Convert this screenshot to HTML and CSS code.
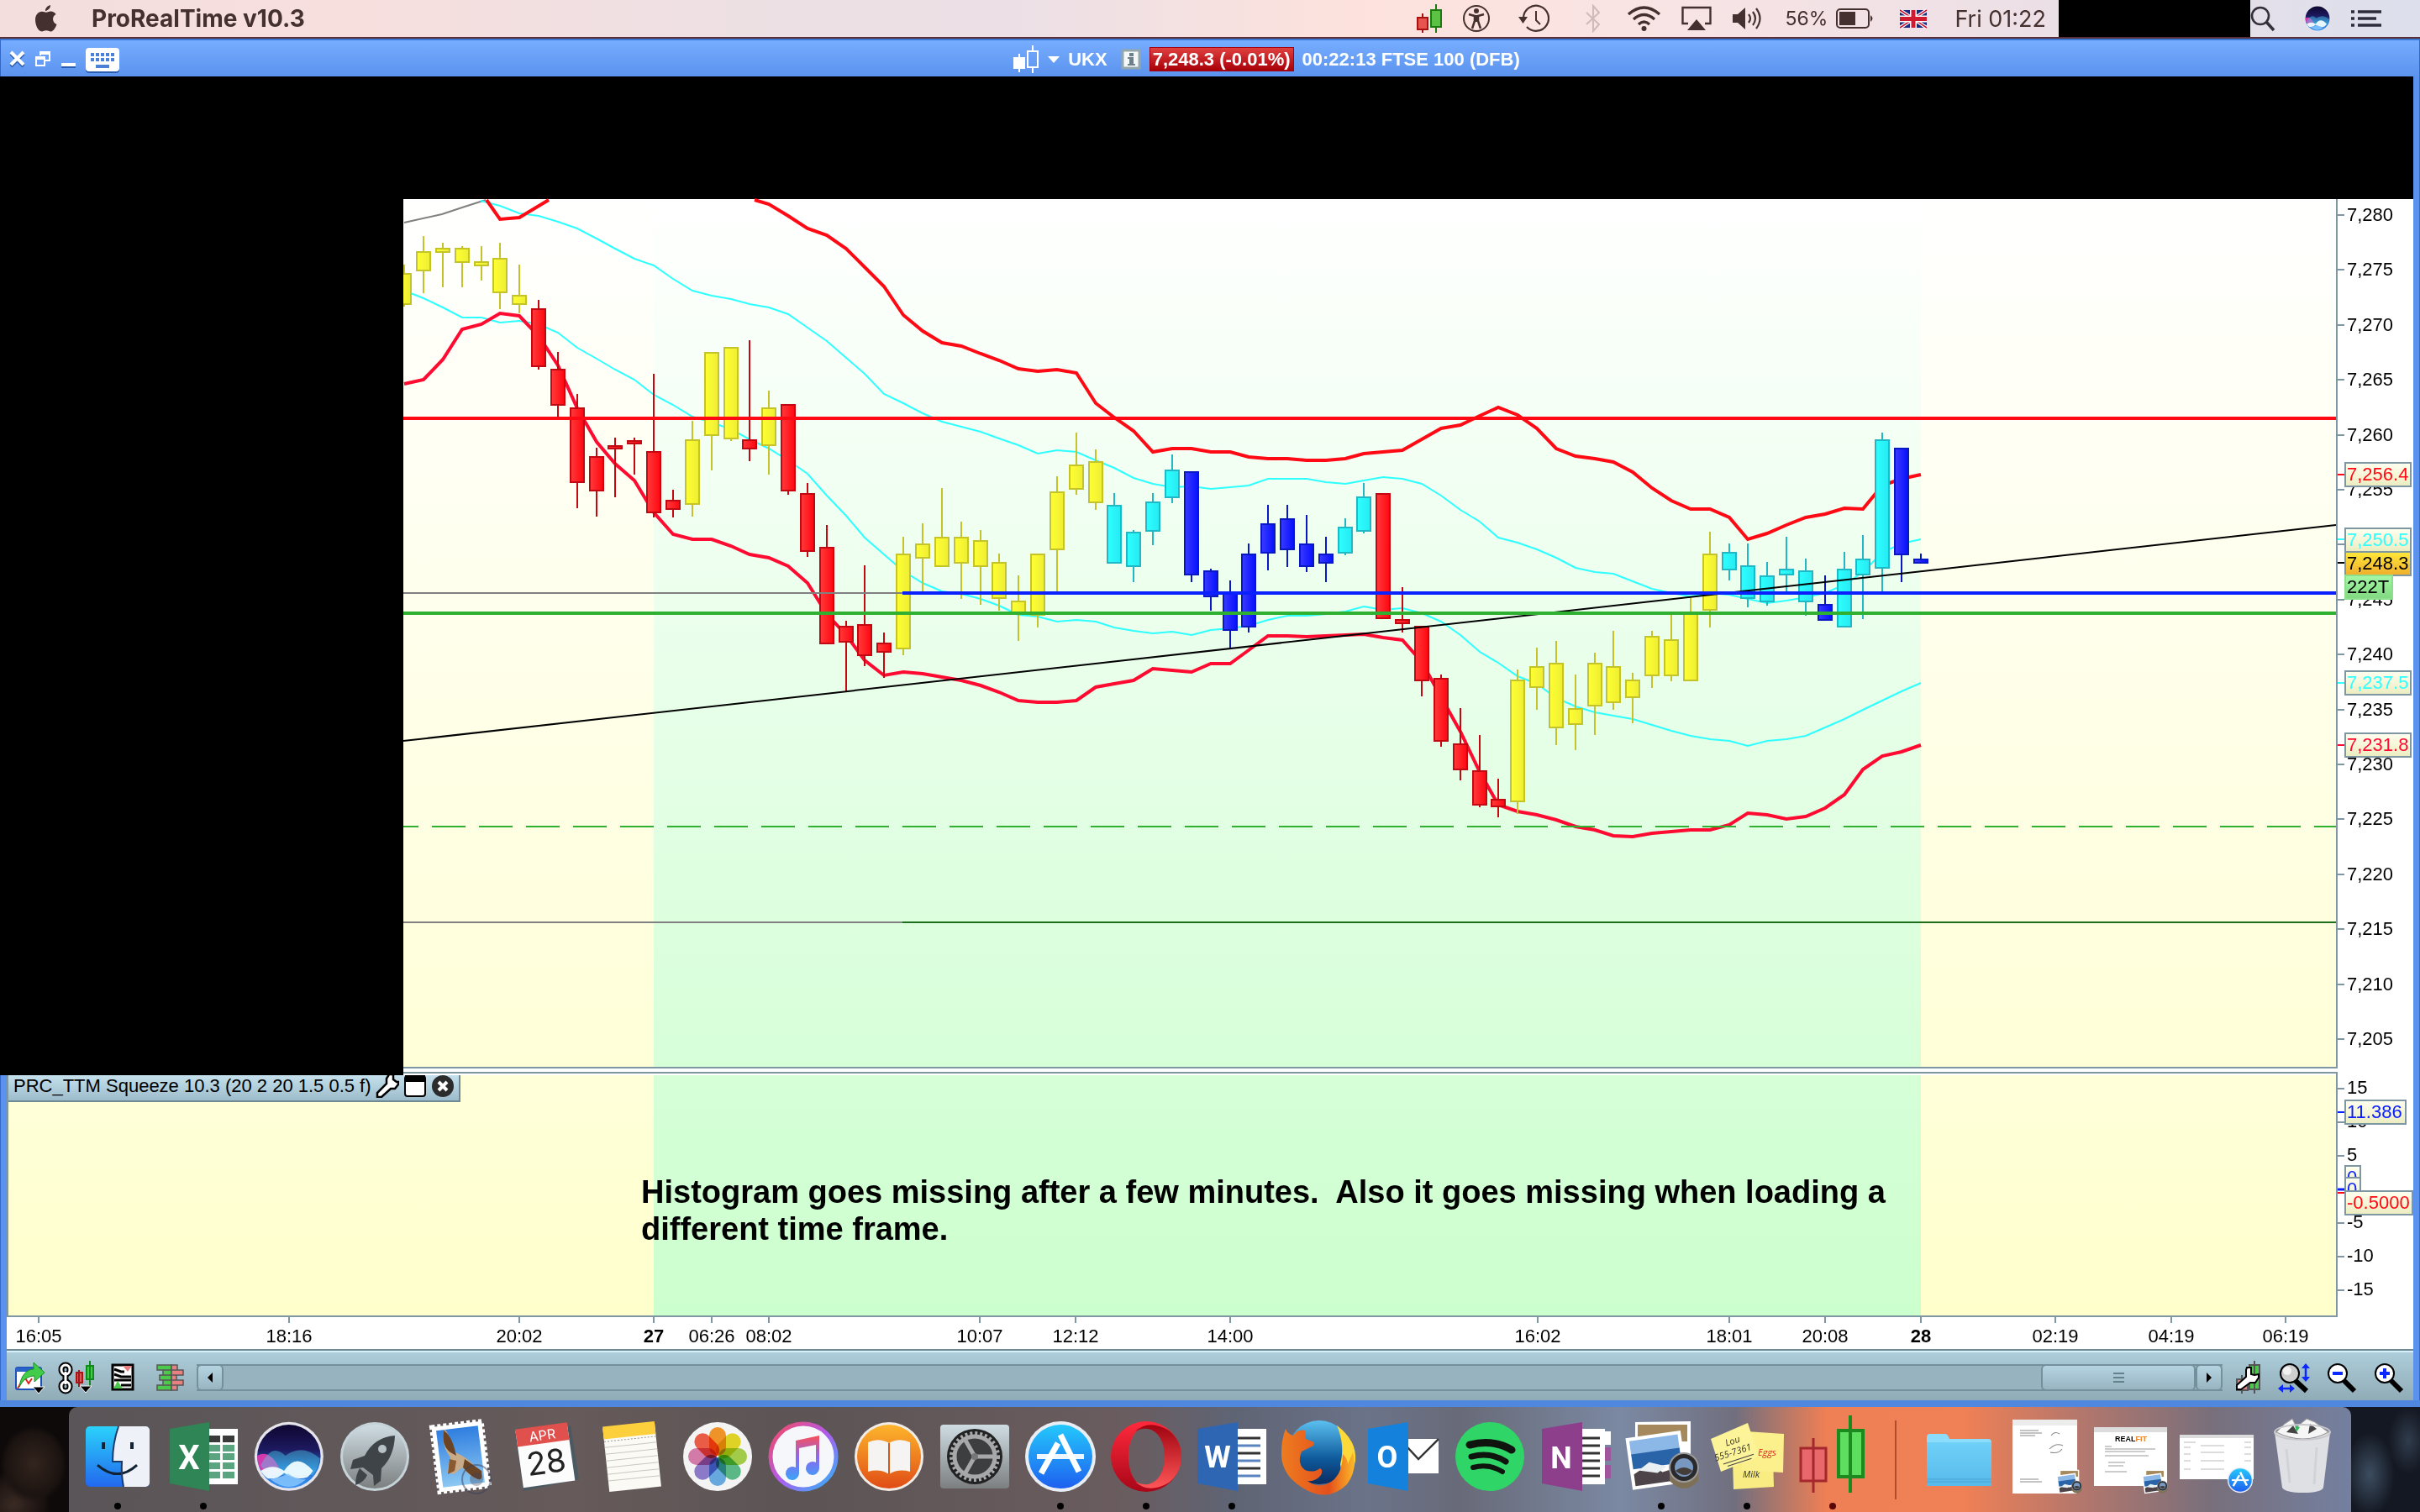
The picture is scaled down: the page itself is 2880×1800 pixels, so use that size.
FILE: index.html
```html
<!DOCTYPE html>
<html lang="en">
<head>
<meta charset="utf-8">
<title>ProRealTime v10.3 – UKX</title>
<link rel="stylesheet" href="styles.css">
</head>
<body>
<header class="menubar">
  <button class="plain" aria-label="Apple menu"><svg width="28" height="34" viewBox="0 0 28 34"><path fill="#44302f" d="M19 1c.3 3-2.500 6.500-6 7C12.600 5 15.500 1.700 19 1zM13.800 9.800c1.500 0 3-1.300 5.500-1.300 2.700 0 5 1.500 6.200 3.400-5.200 3-4.200 10 1 12-1.500 4.300-4.300 8.600-7.200 8.600-2 0-2.700-1.200-5.300-1.200s-3.400 1.200-5.300 1.200C4.500 32.500 1 25 1 18.800c0-6.200 3.800-10 7.800-10 2.400 0 3.800 1 5 1z"/></svg></button>
  <strong class="appname">ProRealTime v10.3</strong>
  <div class="status">
    <svg width="30" height="34" viewBox="0 0 30 34"><g stroke-width="2"><path stroke="#a11" fill="#e8554f" d="M7 11v5M7 31v3M1 16h12v14H1z"/><path stroke="#1c7a10" fill="#5cc244" d="M23 0v7M23 28v6M17 7h12v20H17z"/></g></svg>
    <svg width="34" height="34" viewBox="0 0 34 34"><circle cx="17" cy="17" r="15" fill="none" stroke="#44302f" stroke-width="2"/><circle cx="17" cy="8" r="3" fill="#44302f"/><path d="M8 12l7 2v6l-3 9M26 12l-7 2v6l3 9" fill="none" stroke="#44302f" stroke-width="2.500"/><path d="M14 13h6v8h-6z" fill="#44302f"/></svg>
    <svg width="46" height="34" viewBox="0 0 46 34"><path d="M15 16a15 15 0 1 1 4 11" fill="none" stroke="#44302f" stroke-width="2.200"/><path d="M9 15h11l-5.500 8z" fill="#44302f"/><path d="M30 8v11l5 5" fill="none" stroke="#44302f" stroke-width="2"/></svg>
    <svg width="44" height="34" viewBox="0 0 44 34"><path d="M20 10l15 14-7 8V2l7 8-15 14" fill="none" stroke="#cfb9bb" stroke-width="2"/></svg>
    <svg width="41" height="34" viewBox="0 0 41 34"><g fill="none" stroke="#44302f" stroke-width="3.400"><path d="M2 12q18.500-16 37 0M8 18q12.500-11 25 0M14 24q6.500-6 13 0"/></g><circle cx="20.500" cy="29" r="3" fill="#44302f"/></svg>
    <svg width="36" height="34" viewBox="0 0 36 34"><path d="M8 23H1.500V4h33v19H28" fill="none" stroke="#44302f" stroke-width="2.400"/><path d="M7 31l11-13 11 13z" fill="#44302f"/></svg>
    <svg width="40" height="34" viewBox="0 0 40 34"><path d="M1 12h6l9-8v26l-9-8H1z" fill="#44302f"/><path d="M20 12q4 5 0 10M25 9q6 8 0 16M29 5q9 12 0 24" fill="none" stroke="#44302f" stroke-width="2.200"/></svg>
    <span class="power"><span class="percent">56%</span><svg width="52" height="30" viewBox="0 0 52 30"><rect x="1" y="4" width="38" height="22" rx="4" fill="none" stroke="#44302f" stroke-width="2"/><path d="M4 7h19v16H4z M41 11q5 4 0 8z" fill="#44302f"/></svg></span>
    <svg width="41" height="34" viewBox="0 0 41 34"><path fill="#1a2a80" d="M0 7h32v21H0z"/><path d="M0 7l32 21M32 7L0 28" stroke="#fff" stroke-width="4"/><path d="M0 7l32 21M32 7L0 28" stroke="#c8102e" stroke-width="1.500"/><path d="M16 7v21M0 17.500h32" stroke="#fff" stroke-width="8"/><path d="M16 7v21M0 17.500h32" stroke="#d01a30" stroke-width="5"/></svg>
    <time class="clock">Fri 01:22</time>
  </div>
  <div class="masked-name"></div>
  <div class="menu-end">
    <button class="plain" aria-label="Spotlight"><svg width="32" height="34" viewBox="0 0 32 34"><circle cx="12" cy="14" r="10" fill="none" stroke="#33303c" stroke-width="2.600"/><path d="M19 21l9 10" stroke="#33303c" stroke-width="3.500"/></svg></button>
    <button class="plain siri" aria-label="Siri"><svg width="32" height="34" viewBox="0 0 102 102"><use href="#siri-face"/></svg></button>
    <button class="plain" aria-label="Notification Center"><svg width="36" height="34" viewBox="0 0 36 34"><path d="M0 9h4M8 9h28M0 17h4M8 17h22M0 25h4M8 25h28" stroke="#2c2c3c" stroke-width="3.500"/></svg></button>
  </div>
</header>

<main class="window">
  <div class="titlebar">
    <div class="window-buttons">
      <button class="plain" aria-label="Close"><svg width="20" height="24" viewBox="0 0 20 24"><path d="M2 5l15 15M17 5L2 20" stroke="#2a5cb0" stroke-width="4"/><path d="M2 3l15 15M17 3L2 18" stroke="#fff" stroke-width="4"/></svg></button>
      <button class="plain" aria-label="Restore"><svg width="20" height="24" viewBox="0 0 20 24"><g fill="none" stroke="#fff" stroke-width="2"><path d="M7 7V3h11v10h-5"/><path d="M2 9h10v10H2z"/></g><path d="M7 4h11M2 10h10" stroke="#fff" stroke-width="4"/></svg></button>
      <button class="plain" aria-label="Minimise"><svg width="20" height="24" viewBox="0 0 20 24"><path d="M2 20h17" stroke="#2a5cb0" stroke-width="4"/><path d="M2 18h17" stroke="#fff" stroke-width="4"/></svg></button>
      <button class="plain" aria-label="Keyboard"><svg width="42" height="32" viewBox="0 0 42 32"><rect x="1" y="4" width="40" height="28" rx="4" fill="#2a5cb0"/><rect x="1" y="2" width="40" height="28" rx="4" fill="#fff"/><path d="M7 10h29M7 16h29" stroke="#4a80d8" stroke-width="4" stroke-dasharray="4 2"/><path d="M13 24h16" stroke="#4a80d8" stroke-width="4"/></svg></button>
    </div>
    <div class="instrument">
      <svg width="32" height="34" viewBox="0 0 32 34"><path d="M1 14h14v14H1zM7 10h2v22H7z" fill="#fff"/><path d="M18 7h12v19H18zM24 0v7M24 26v7" fill="none" stroke="#fff" stroke-width="2"/></svg>
      <svg width="14" height="8" viewBox="0 0 14 8"><path d="M0 0h14L7 8z" fill="#fff"/></svg>
      <span class="symbol">UKX</span>
      <svg width="24" height="26" viewBox="0 0 24 26"><path fill="#f4f8f8" stroke="#93a7ad" stroke-width="3" d="M2 2h20v21H2z"/><path fill="#6d7f88" d="M10 5h5v4h-5zM8 10h7v8h2v2H8v-2h2v-6H8z"/></svg>
      <span class="quote">7,248.3 (-0.01%)</span>
      <span>00:22:13 FTSE 100 (DFB)</span>
    </div>
  </div>
  <div class="masked-band"></div>

  <svg class="panel" id="price" viewBox="8 237 2864 1043" role="img" aria-label="FTSE 100 price chart">
    <defs>
      <linearGradient id="off" x1="0" y1="0" x2="0" y2="1"><stop offset="0" stop-color="#fff"/><stop offset="1" stop-color="#ffffd8"/></linearGradient>
      <linearGradient id="day" x1="0" y1="0" x2="0" y2="1"><stop offset="0" stop-color="#fff"/><stop offset="1" stop-color="#d6ffd8"/></linearGradient>
      <linearGradient id="off2" x1="0" y1="0" x2="0" y2="1"><stop offset="0" stop-color="#ffffda"/><stop offset="1" stop-color="#ffffcc"/></linearGradient>
      <linearGradient id="day2" x1="0" y1="0" x2="0" y2="1"><stop offset="0" stop-color="#d6ffd8"/><stop offset="1" stop-color="#ccffce"/></linearGradient>
      <linearGradient id="y"><stop offset="0" stop-color="#ffff33"/><stop offset="1" stop-color="#eeee33"/></linearGradient>
      <linearGradient id="r"><stop offset="0" stop-color="#ff3b3b"/><stop offset="1" stop-color="#ff0610"/></linearGradient>
      <linearGradient id="c"><stop offset="0" stop-color="#2effff"/><stop offset="1" stop-color="#26eaf2"/></linearGradient>
      <linearGradient id="b"><stop offset="0" stop-color="#3b3bff"/><stop offset="1" stop-color="#0610ff"/></linearGradient>
      <linearGradient id="tag" x1="0" y1="0" x2="0" y2="1"><stop offset="0" stop-color="#fffff0"/><stop offset="1" stop-color="#ececc0"/></linearGradient>
      <linearGradient id="gold" x1="0" y1="0" x2="0" y2="1"><stop offset="0" stop-color="#ffe93a"/><stop offset="1" stop-color="#f0ad2c"/></linearGradient>
      <linearGradient id="mint" x1="0" y1="0" x2="0" y2="1"><stop offset="0" stop-color="#a6f8a6"/><stop offset="1" stop-color="#80d880"/></linearGradient>
    </defs>
    <path fill="#fff" d="M8 237h2864v1043H8z"/>
    <path fill="url(#off)" d="M480 237h2301v1033H480z"/>
    <path fill="url(#day)" d="M778 237h1508v1033H778z"/>
    <g id="bands"></g>
    <g id="candles"></g>
    <path class="trend" d="M480 882L2780 625"/>
    <path class="level grey" d="M480 706H1074"/>
    <path class="level red" d="M480 498H2780"/>
    <path class="level blue" d="M1074 706H2780"/>
    <path class="level green" d="M480 730H2780"/>
    <path class="level dashed" d="M480 984H2780"/>
    <path class="thin grey" d="M480 1098H1074"/>
    <path class="thin dark" d="M1074 1098H2780"/>
    <path class="frame" d="M480 1271H2781V237M480 1277H2781V1280"/>
    <g id="price-axis"></g>
    <path d="M0 237h480v1043H0z"/>
  </svg>

  <section class="indicator">
    <svg class="panel" id="squeeze" viewBox="8 1280 2864 326" role="img" aria-label="TTM Squeeze indicator">
      <path fill="#fff" d="M8 1280h2864v326H8z"/>
      <path fill="url(#off2)" d="M10 1280h2771v286H10z"/>
      <path fill="url(#day2)" d="M778 1280h1508v286H778z"/>
      <path class="frame" d="M9 1280V1567H2781V1280"/>
      <g id="squeeze-axis"></g>
      <g id="time-axis"></g>
      <g class="note"><text x="763" y="1432">Histogram goes missing after a few minutes.  Also it goes missing when loading a</text><text x="763" y="1476">different time frame.</text></g>
    </svg>
    <div class="indicator-head">
      <span>PRC_TTM Squeeze 10.3 (20 2 20 1.5 0.5 f)</span>
      <button class="plain" aria-label="Settings"><svg width="28" height="28" viewBox="0 0 28 28"><path d="M16 0h5v6l4 3h2v3l-4 5h-5L7 27H2v-5l11-11V5z" fill="#fff" stroke="#000" stroke-width="2.500"/></svg></button>
      <button class="plain" aria-label="Maximise"><svg width="28" height="28" viewBox="0 0 28 28"><rect x="2" y="2" width="24" height="24" rx="3" fill="#fff" stroke="#000" stroke-width="2"/><path d="M2 1h24v8H2z"/></svg></button>
      <button class="plain" aria-label="Remove"><svg width="28" height="28" viewBox="0 0 28 28"><circle cx="14" cy="14" r="13" fill="#2c2c2c"/><path d="M9 9l10 10M19 9L9 19" stroke="#fff" stroke-width="4"/></svg></button>
    </div>
  </section>

  <div class="toolbar">
    <button class="plain" aria-label="Share chart"><svg width="38" height="42" viewBox="0 0 38 42"><rect x="1" y="9" width="30" height="26" rx="2" fill="#fff" stroke="#1b50b8" stroke-width="2"/><path d="M1 9h30v5H1z" fill="#2a62c8"/><path d="M3 34l8-14 5 8 4-6" fill="none" stroke="#e02020" stroke-width="2"/><path d="M5 32C7 18 14 11 22 11V3l13 12-12 11v-7C15 19 9 24 5 32z" fill="#42cc4a" stroke="#159022"/><path d="M21 32h14l-7 8z" stroke="#fff"/></svg></button>
    <button class="plain" aria-label="Link chart"><svg width="46" height="42" viewBox="0 0 46 42"><g fill="none" stroke="#000" stroke-width="7"><rect x="5" y="6" width="10" height="11" rx="5"/><rect x="5" y="26" width="10" height="11" rx="5"/><path d="M10 14v15"/></g><g fill="none" stroke="#fff" stroke-width="3"><rect x="5" y="6" width="10" height="11" rx="5"/><rect x="5" y="26" width="10" height="11" rx="5"/><path d="M10 14v15"/></g><path d="M26 12v20M23 15h7v12h-7z" fill="#e25858" stroke="#a01818" stroke-width="2"/><path d="M39 1v32M35 7h8v16h-8z" fill="#42cc4a" stroke="#108a18" stroke-width="2"/><path d="M27 31h14l-7 8z" stroke="#fff"/></svg></button>
    <button class="plain list" aria-label="Indicators"><svg width="28" height="34" viewBox="0 0 28 34"><path fill="#fff" stroke="#000" stroke-width="3" d="M2 2h24v29H2z"/><path d="M4 7l8 3h4M4 13l8 3h12M4 20h20M12 26h12" fill="none" stroke="#000" stroke-width="3"/><path d="M14 3h11l-5 7z" fill="#e88080"/><path d="M3 30l5-9 6 9z" fill="#4cc84c"/></svg></button>
    <button class="plain book" aria-label="Order book"><svg width="34" height="34" viewBox="0 0 34 34"><g stroke="#555" stroke-width="1.500"><path fill="#4cc84c" d="M1 2h17v6H1zM8 8h10v6H8zM4 14h14v6H4zM8 20h10v6H8zM1 26h17v6H1z"/><path fill="#e88080" d="M18 2h7v6h-7zM18 8h14v6H18zM18 14h6v6h-6zM18 20h14v6H18zM18 26h7v6h-7z"/></g></svg></button>
    <div class="scroller">
      <button class="step" aria-label="Scroll left"><svg width="8" height="14" viewBox="0 0 8 14"><path d="M7 1v12L1 7z"/></svg></button>
      <div class="track"><div class="thumb"><i></i><i></i><i></i></div></div>
      <button class="step" aria-label="Scroll right"><svg width="8" height="14" viewBox="0 0 8 14"><path d="M1 1v12l6-6z"/></svg></button>
    </div>
    <div class="zooms">
      <button class="plain" aria-label="Chart settings"><svg width="38" height="42" viewBox="0 0 38 42"><path d="M11 18v22M5 23h13v13H5z" fill="#e88080" stroke="#555" stroke-width="2"/><path d="M26 1v39M20 6h12v29H20z" fill="#4cc84c" stroke="#555" stroke-width="2"/><path d="M17 9h5v8l4 1 5-1v4l-4 6h-6L10 35H5v-5l11-10v-8z" fill="#fff" stroke="#000" stroke-width="2"/></svg></button>
      <button class="plain" aria-label="Zoom fit"><svg width="42" height="42" viewBox="0 0 42 42"><path d="M22 24l14 13" stroke="#000" stroke-width="6"/><circle cx="16" cy="16" r="11" fill="#cfcfcf" stroke="#000" stroke-width="2"/><circle cx="13" cy="13" r="5" fill="#f2f2f2"/><path d="M35 8v14M6 34h12" stroke="#0a28ff" stroke-width="2.500"/><path d="M30 10l5-6 5 6zM30 20l5 6 5-6zM8 29v10l-6-5zM16 29v10l6-5z" fill="#0a28ff"/></svg></button>
      <button class="plain" aria-label="Zoom out"><svg width="42" height="42" viewBox="0 0 42 42"><path d="M24 24l13 13" stroke="#000" stroke-width="6"/><circle cx="17" cy="16" r="11" fill="#fff" stroke="#000" stroke-width="2"/><path d="M11 16h12" stroke="#0a28ff" stroke-width="4"/></svg></button>
      <button class="plain" aria-label="Zoom in"><svg width="42" height="42" viewBox="0 0 42 42"><path d="M24 24l13 13" stroke="#000" stroke-width="6"/><circle cx="17" cy="16" r="11" fill="#fff" stroke="#000" stroke-width="2"/><path d="M11 16h12M17 10v12" stroke="#0a28ff" stroke-width="4"/></svg></button>
    </div>
  </div>
</main>

<footer class="desktop">
  <svg class="defs" width="0" height="0" aria-hidden="true"><defs>
    <linearGradient id="siriBg" x1="0" y1="0" x2="0" y2="1"><stop offset="0" stop-color="#0e0630"/><stop offset=".4" stop-color="#1d1a60"/><stop offset=".7" stop-color="#2470d0"/><stop offset="1" stop-color="#3a90f0"/></linearGradient>
    <linearGradient id="finder" x1="0" y1="0" x2="0" y2="1"><stop offset="0" stop-color="#2bd2fb"/><stop offset="1" stop-color="#2268ee"/></linearGradient>
    <linearGradient id="silver" x1="0" y1="0" x2="0" y2="1"><stop offset="0" stop-color="#cfdde3"/><stop offset="1" stop-color="#7c7f80"/></linearGradient>
    <linearGradient id="books" x1="0" y1="0" x2="0" y2="1"><stop offset="0" stop-color="#fdb52c"/><stop offset="1" stop-color="#e04c16"/></linearGradient>
    <linearGradient id="store" x1="0" y1="0" x2="0" y2="1"><stop offset="0" stop-color="#24c8fc"/><stop offset="1" stop-color="#1e60f0"/></linearGradient>
    <linearGradient id="opera" x1="0" y1="0" x2="0" y2="1"><stop offset="0" stop-color="#ff2a3c"/><stop offset="1" stop-color="#a80618"/></linearGradient>
    <linearGradient id="operaRight" x1="0" y1="0" x2="0" y2="1"><stop offset="0" stop-color="#a00410"/><stop offset="1" stop-color="#ff5658"/></linearGradient>
    <linearGradient id="tune" x1="0" y1="0" x2="1" y2="1"><stop offset="0" stop-color="#f8485a"/><stop offset=".5" stop-color="#b05cf0"/><stop offset="1" stop-color="#28b8f8"/></linearGradient>
    <linearGradient id="note" x1="0" y1="0" x2="0" y2="1"><stop offset="0" stop-color="#fb4e58"/><stop offset=".5" stop-color="#8a68f0"/><stop offset="1" stop-color="#3aa4f8"/></linearGradient>
    <linearGradient id="sky" x1="0" y1="0" x2="0" y2="1"><stop offset="0" stop-color="#2f7ee0"/><stop offset="1" stop-color="#8cc8f2"/></linearGradient>
    <linearGradient id="folder" x1="0" y1="0" x2="0" y2="1"><stop offset="0" stop-color="#6fd0f8"/><stop offset="1" stop-color="#58baea"/></linearGradient>
    <linearGradient id="globe" x1="0" y1="0" x2="0" y2="1"><stop offset="0" stop-color="#5cc0f0"/><stop offset=".6" stop-color="#0e5a9c"/><stop offset="1" stop-color="#0c2c60"/></linearGradient>
    <linearGradient id="fox" x1="0" y1="0" x2="1" y2="0"><stop offset="0" stop-color="#ee7c20"/><stop offset=".65" stop-color="#e4501c"/><stop offset="1" stop-color="#fcb828"/></linearGradient>
    <g id="siri-face"><circle cx="51" cy="51" r="50" fill="#e4e4ea"/><circle cx="51" cy="51" r="46" fill="url(#siriBg)"/><path d="M5 50q14-8 26 8 6 8 8 16-20 8-28-2-6-10-6-22z" fill="#e838b0" opacity=".9"/><path d="M10 64Q26 30 46 50q24-18 50 4-2 14-10 24H20z" fill="#50d8f0" opacity=".4"/><path d="M10 72q18-12 34 0 18-28 42 0-4 6-8 9-16 6-34-6-10 10-24 8-6-4-10-11z" fill="#f0fcff" opacity=".95"/><path d="M24 84q14-2 26-8 14 10 26 8-24 22-52 0z" fill="#8ccaff" opacity=".8"/></g>
    <g id="store-face"><circle r="42" fill="#e8eef4"/><circle r="38" fill="url(#store)"/><path d="M-28 0h56" stroke="#eef6ff" stroke-width="6"/><path d="M-3-16L-23 20M0-26L22 18" stroke="#fff" stroke-width="7"/></g>
    <g id="preview-face"><path fill="#fff" d="M12 20l66-1v70H12z"/><path fill="#a5885c" d="M15 23h59v20H15z"/><g transform="rotate(-8 40 62)"><path fill="#fff" d="M4 34h66v62H4z"/><path fill="#8cb8e8" d="M8 38h58v18H8z"/><path fill="#2a64a8" d="M8 54h58v18H8z"/><path fill="#4c4448" d="M8 78l20-10 14 12 24-4v16H8z"/><path fill="#e8f0f4" d="M14 74l14-8 20 8-12 6z"/></g><path d="M53 74v16q17 18 34 0V74z" fill="#7d7056"/><circle cx="70" cy="74" r="17" fill="#2a2a2c" stroke="#9a9a9a" stroke-width="2"/><circle cx="70" cy="74" r="11" fill="#7898c0"/><path d="M60 78q10-8 20 0-8 10-20 0z" fill="#443c38"/></g>
  </defs></svg>
  <nav class="dock" aria-label="Dock">
    <button class="plain" aria-label="Finder"><svg viewBox="0 0 102 126"><rect x="13" y="23" width="76" height="72" rx="5" fill="url(#finder)"/><path d="M51 23h33a5 5 0 0 1 5 5v62a5 5 0 0 1-5 5H58q-3-13-2-30H45q0-24 6-42z" fill="#eef2f8"/><path d="M34 42v8M68 42v8" stroke="#123" stroke-width="4"/><path d="M27 69q24 21 47 0" fill="none" stroke="#123" stroke-width="3"/><path d="M52 23q-7 20-7 42h11q-1 15 2 30" fill="none" stroke="#1a3a6a" stroke-width="2"/><circle class="dot" cx="51" cy="118" r="4"/></svg></button>
    <button class="plain" aria-label="Excel"><svg viewBox="0 0 102 126"><path fill="#fff" d="M55 26h37v66H55z"/><path stroke="#5aa480" stroke-width="8" stroke-dasharray="14 3" d="M57 49h34M57 59h34M57 70h34M57 81h34"/><path stroke="#3a3a3a" stroke-width="8" stroke-dasharray="14 3" d="M57 38h34"/><path fill="#2f8556" d="M11 26l47-8v82l-47-9z"/><text class="letter" x="34" y="74">X</text><circle class="dot" cx="51" cy="118" r="4"/></svg></button>
    <button class="plain" aria-label="Siri"><svg viewBox="0 0 102 126"><use href="#siri-face" transform="translate(9 17) scale(.82)"/></svg></button>
    <button class="plain" aria-label="Launchpad"><svg viewBox="0 0 102 126"><circle cx="51" cy="59" r="41" fill="#c5d2d8"/><circle cx="51" cy="59" r="38" fill="url(#silver)"/><path d="M75 34q-25 2-36 24l-14 5-3 11 15-2 12 9 1 13 8-6 1-15q15-14 16-39zM33 73l9 8q-3 8-14 12 0-12 5-20z" fill="#3f4448"/><circle cx="60" cy="50" r="5" fill="#b8c2c6"/></svg></button>
    <button class="plain" aria-label="Mail"><svg viewBox="0 0 102 126"><g transform="rotate(-7 51 59)"><path d="M21 20h60v78H21z" fill="#fff" stroke="#fff" stroke-width="5" stroke-dasharray="4 3"/><path fill="url(#sky)" d="M26 25h50v68H26z"/></g><path d="M31 28q2-2 4 2l10 24 8 4 6 4 16 14q2 12-4 10-10-4-18-14l-10 8-8-2 4-18Q28 46 31 28z" fill="#c8ab88"/><path d="M31 28q10 6 15 30l-7-4Q28 46 31 28zM56 62l20 14q2 12-4 10-10-4-18-14z" fill="#6a4424"/><path d="M44 76l-8 4 2-18 8 2z" fill="#8a5a30"/><circle cx="70" cy="86" r="17" fill="none" stroke="#38405c" stroke-width="2" opacity=".5"/><circle cx="70" cy="86" r="8" fill="#38405c" opacity=".35"/></svg></button>
    <button class="plain" aria-label="Calendar"><svg viewBox="0 0 102 126"><path fill="#4b5a62" d="M14 32l66-10 10 64-66 14z"/><g transform="rotate(-8 51 59)"><path fill="#fcfcfc" d="M19 24h62v68H19z"/><path fill="#e0504c" d="M19 22h62v21H19z"/><text class="month" x="50" y="39">APR</text><text class="date" x="50" y="79">28</text></g></svg></button>
    <button class="plain" aria-label="Notes"><svg viewBox="0 0 102 126"><g transform="rotate(-6 51 59)"><path fill="#fbfaf4" d="M20 22h62v76H20z"/><path fill="#fcd03c" d="M20 20h62v15H20z"/><path stroke="#c8c8c0" d="M20 45h62M20 53h62M20 61h62M20 69h62M20 77h62M20 85h62"/><path d="M20 38h62" stroke="#999" stroke-dasharray="2 2"/></g></svg></button>
    <button class="plain" aria-label="Photos"><svg viewBox="0 0 102 126"><circle cx="51" cy="59" r="41" fill="#f4f4f4"/><g class="petals"><rect x="41" y="24" width="20" height="34" rx="10" fill="#f89a28"/><rect x="41" y="24" width="20" height="34" rx="10" fill="#e8dc28" transform="rotate(45 51 59)"/><rect x="41" y="24" width="20" height="34" rx="10" fill="#a8d44c" transform="rotate(90 51 59)"/><rect x="41" y="24" width="20" height="34" rx="10" fill="#60c08c" transform="rotate(135 51 59)"/><rect x="41" y="24" width="20" height="34" rx="10" fill="#6cb0e8" transform="rotate(180 51 59)"/><rect x="41" y="24" width="20" height="34" rx="10" fill="#9080d0" transform="rotate(225 51 59)"/><rect x="41" y="24" width="20" height="34" rx="10" fill="#dc80b0" transform="rotate(270 51 59)"/><rect x="41" y="24" width="20" height="34" rx="10" fill="#f46048" transform="rotate(315 51 59)"/></g></svg></button>
    <button class="plain" aria-label="iTunes"><svg viewBox="0 0 102 126"><circle cx="51" cy="59" r="39" fill="#f6f7fa" stroke="url(#tune)" stroke-width="5"/><path d="M42 40l28-6v39a8 8 0 1 1-4-7V45l-20 4v30a8 8 0 1 1-4-7z" fill="url(#note)"/></svg></button>
    <button class="plain" aria-label="iBooks"><svg viewBox="0 0 102 126"><circle cx="51" cy="59" r="41" fill="#f2ece6"/><circle cx="51" cy="59" r="38" fill="url(#books)"/><path d="M51 43q-12-7-25-1v35q14-4 25 3 11-7 25-3V42q-13-6-25 1z" fill="#f6f4f2"/><path d="M51 43v37" stroke="#d05a1c" stroke-width="2"/></svg></button>
    <button class="plain" aria-label="System Preferences"><svg viewBox="0 0 102 126"><rect x="10" y="21" width="82" height="76" rx="4" fill="url(#silver)"/><circle cx="51" cy="59" r="33" fill="#222"/><circle cx="51" cy="59" r="24" fill="#3c3e40" stroke="#a6a8aa" stroke-width="5"/><circle cx="51" cy="59" r="28" fill="none" stroke="#a6a8aa" stroke-width="4" stroke-dasharray="3 3"/><path d="M51 59h24M51 59L39 38M51 59L39 80" stroke="#a6a8aa" stroke-width="5"/><circle cx="51" cy="59" r="4" fill="#777"/></svg></button>
    <button class="plain" aria-label="App Store"><svg viewBox="0 0 102 126"><use href="#store-face" x="51" y="59"/><circle class="dot" cx="51" cy="118" r="4"/></svg></button>
    <button class="plain" aria-label="Opera"><svg viewBox="0 0 102 126"><path fill="url(#opera)" fill-rule="evenodd" d="M51 17a42 42 0 1 1 0 84a42 42 0 1 1 0-84zm0 7c-13 0-21 16-21 35s8 35 21 35 22-16 22-35-9-35-22-35z"/><path fill="url(#operaRight)" d="M38 29Q54 14 78 28q15 12 15 31T78 90Q54 104 38 89q16 8 27-4 8-10 8-26t-8-26Q54 21 38 29z"/><circle class="dot" cx="51" cy="118" r="4"/></svg></button>
    <button class="plain" aria-label="Word"><svg viewBox="0 0 102 126"><path fill="#fff" d="M55 26h37v66H55z"/><path stroke="#333" stroke-width="3" d="M58 37h27M58 55h27M58 73h27"/><path stroke="#5a84c0" stroke-width="3" d="M58 46h27M58 64h27M58 82h27"/><path fill="#2f66b4" d="M10 26l48-8v82l-48-9z"/><text class="letter small" x="34" y="72">W</text><circle class="dot" cx="51" cy="118" r="4"/></svg></button>
    <button class="plain" aria-label="Firefox"><svg viewBox="0 0 102 126"><circle cx="53" cy="54" r="38" fill="url(#globe)"/><path d="M74 22q24 18 22 42-4 22-20 28 4-16 2-24 6-22-4-46z" fill="#fcd838"/><path d="M13 26q2 6 9 8 6-8 14-6l1 10 10 4-1 4-14 7q-6 14 4 22 10 4 18-2 4 2 1 8-6 8-16 7 16 12 32-2 10-10 10-30 6 6 6 12l6-14q6 20-7 38-20 20-46 8Q8 84 8 56q0-18 5-30z" fill="url(#fox)"/></svg></button>
    <button class="plain" aria-label="Outlook"><svg viewBox="0 0 102 126"><path fill="#fff" d="M55 38h38v41H55z"/><path d="M56 48l13 14 24-24" fill="none" stroke="#333" stroke-width="2.500"/><path fill="#1482dc" d="M9 26l48-8v82L9 91z"/><text class="letter small" x="32" y="72">O</text></svg></button>
    <button class="plain" aria-label="Spotify"><svg viewBox="0 0 102 126"><circle cx="51" cy="59" r="41" fill="#2fd566"/><g fill="none" stroke="#10140f" stroke-linecap="round"><path stroke-width="9" d="M27 45q28-7 50 6"/><path stroke-width="7" d="M29 59q23-6 41 6"/><path stroke-width="6" d="M31 72q19-5 35 5"/></g></svg></button>
    <button class="plain" aria-label="OneNote"><svg viewBox="0 0 102 126"><path fill="#fff" d="M56 26h30v66H56z"/><path fill="#a0559c" d="M86 48h7v16h-7zM86 69h7v16h-7z"/><path fill="#fff" d="M86 29h7v16h-7z"/><path stroke="#333" stroke-width="3" d="M58 37h22M58 46h22M58 55h22M58 64h22M58 73h22M58 82h22"/><path fill="#8d3f8b" d="M11 26l48-8v82l-48-9z"/><text class="letter small" x="34" y="73">N</text></svg></button>
    <button class="plain" aria-label="Preview"><svg viewBox="0 0 102 126"><use href="#preview-face" x="8" y="-2"/><circle class="dot" cx="51" cy="118" r="4"/></svg></button>
    <button class="plain" aria-label="Stickies"><svg viewBox="0 0 102 126"><path fill="#f8ec82" d="M34 62h48l1 33-48 3z"/><text class="pen" x="46" y="84">Milk</text><path fill="#fcf08c" d="M50 29l45 3-1 46-50-3z"/><text class="pen redpen" x="64" y="58">Eggs</text><path fill="#fdf49a" d="M8 38l44-19 13 40-45 18z"/><g transform="rotate(-18 36 50)"><text class="pen" x="28" y="44">Lou</text><text class="pen" x="10" y="57">555-7361</text><path d="M18 63h38M22 67h30" stroke="#444"/></g><circle class="dot" cx="51" cy="118" r="4"/></svg></button>
    <button class="plain" aria-label="ProRealTime"><svg viewBox="0 0 102 126"><path d="M28 37v65M13 49h30v39H13z" stroke="#a4282c" stroke-width="3" fill="#e8686c"/><path d="M72 10v92M58 28h29v55H58z" stroke="#1d8a1f" stroke-width="4" fill="#5ede5e"/><circle cx="51" cy="118" r="4" fill="#5a0606"/></svg></button>
    <hr class="divider">
    <button class="plain" aria-label="Downloads"><svg viewBox="0 0 102 126"><path fill="#8cdcfc" d="M12 36q0-4 4-4h18q3 0 5 6h46q4 0 4 4v10H12z"/><path fill="url(#folder)" d="M12 42h77v52H12z"/><path stroke="#48a4d4" d="M12 86h77M12 89h77"/></svg></button>
    <button class="plain" aria-label="Document window"><svg viewBox="0 0 102 126"><path fill="#fff" d="M12 15h77v88H12z"/><path fill="#ececec" d="M12 15h77v7H12z"/><path stroke="#888" d="M21 28h22M21 31h26M21 34h18M21 86h22M21 89h26"/><path d="M58 34q4-6 10-2M56 50q8-8 16-4M57 54q10 2 14-4" fill="none" stroke="#888"/><use href="#preview-face" transform="translate(64 68) scale(.35)"/></svg></button>
    <button class="plain" aria-label="Letter window"><svg viewBox="0 0 102 126"><path fill="#fff" d="M7 24h87v70H7z"/><path fill="#dcdcdc" d="M7 24h87v6H7z"/><text class="brand" x="32" y="41">REAL<tspan fill="#f08020">FIT</tspan></text><path stroke="#999" d="M20 47h8M20 50h60M20 53h48M20 58h52M24 66h20M24 70h18M20 77h26"/><use href="#preview-face" transform="translate(64 68) scale(.35)"/></svg></button>
    <button class="plain" aria-label="Updates window"><svg viewBox="0 0 102 126"><path fill="#fff" d="M7 33h88v53H7z"/><path fill="#dcdcdc" d="M7 33h88v4H7z"/><path stroke="#bbb" d="M12 42h14M84 42h8M12 48h8M32 46h28M84 48h8M12 56h8M32 54h28M84 56h8M12 64h8M32 64h28M84 64h8M12 74h8M32 74h28"/><use href="#store-face" transform="translate(79 87) scale(.36)"/></svg></button>
    <button class="plain" aria-label="Trash"><svg viewBox="0 0 102 126"><path fill="#dfe0e4" d="M18 30q33-12 66 0l-8 66q-3 6-24 6t-25-6z"/><path d="M20 30l10-10 9-6 5 10 12-10 10 4 8 6 8 6q-30 16-62 0z" fill="#f6f6f6" stroke="#999"/><path d="M32 30l8-8 6 10zM60 20l8 6-10 6z" fill="#444"/><path d="M42 22l6 2-4 6z" fill="#38b860"/><ellipse cx="51" cy="30" rx="33" ry="9" fill="none" stroke="#c8c8cc" stroke-width="2"/><path d="M32 50l4 40M68 48l-3 44" stroke="#d2d3d7" stroke-width="3"/></svg></button>
  </nav>
</footer>
<script src="chart.js"></script>
</body>
</html>
```
FILE: styles.css
```css
* { box-sizing: border-box; }

body {
  margin: 0;
  min-height: 100vh;
  display: flex;
  flex-direction: column;
  font-family: "Liberation Sans", Arial, sans-serif;
  font-size: 22px;
  color: #000;
  background: #14110f;
}

svg { display: block; flex: none; }
.defs { position: absolute; }
.plain { padding: 0; border: 0; background: none; display: block; font: inherit; }

/* macOS menu bar */
.menubar {
  height: 46px;
  display: flex;
  align-items: center;
  padding: 0 46px 0 41px;
  border-bottom: 2px solid #5a3038;
  background: linear-gradient(90deg, #f3dedd, #f7dfde 15%, #ece0e4 32%, #ece0e6 42%, #fde2dc 56%, #f9e4e4 68%, #ece0e6 84%, #dcdfec);
  color: #44302f;
  font-family: Inter, sans-serif;
}
.appname { margin-left: 40px; font-size: 28px; font-weight: 700; }
.status { margin-left: auto; display: flex; align-items: center; gap: 24px; }
.power { display: flex; align-items: center; gap: 10px; }
.percent { font-size: 23px; }
.clock { font-size: 27px; }
.masked-name { width: 228px; height: 44px; margin-left: 15px; background: #000; }
.menu-end { display: flex; align-items: center; gap: 24px; }
.siri { margin-left: 8px; }

/* Application window */
.window { background: #5b92ee; border: solid #3468c8; border-width: 0 1px; }
.titlebar {
  height: 45px;
  display: flex;
  align-items: center;
  padding: 2px 8px 0 10px;
  border-top: 2px solid #3a78d8;
  background: linear-gradient(#76adff, #5b93ee);
  color: #fff;
  font-weight: bold;
}
.window-buttons { display: flex; align-items: center; gap: 10px; }
.instrument { margin: 0 auto; display: flex; align-items: center; gap: 10px; }
.symbol { margin-right: 6px; }
.quote {
  padding: 0 3px;
  line-height: 27px;
  border: 1px solid #a00010;
  background: linear-gradient(#e04040, #a80008);
}
.masked-band { height: 146px; margin: 0 7px 0 -1px; background: #000; }

/* Chart panels */
.panel { width: calc(100% - 14px); margin: 0 7px; overflow: visible; }
.panel text { font-size: 22px; }
.panel .bold { font-weight: bold; }
.middle { text-anchor: middle; }
.trend { stroke: #000; stroke-width: 2; }
.level { stroke-width: 4; }
.thin { stroke-width: 2; }
.red { stroke: #ff0a14; }
.blue { stroke: #0a20ff; }
.green { stroke: #30b030; }
.grey { stroke: #808080; stroke-width: 2; }
.dark { stroke: #1c701c; }
.dashed { stroke: #30b030; stroke-width: 2; stroke-dasharray: 40 16; stroke-dashoffset: 22; }
.frame { fill: none; stroke: #7f97a3; stroke-width: 2; }
.tick { stroke: #7f97a3; stroke-width: 2; }
.band { fill: none; }
.band.outer { stroke: #ff0a14; stroke-width: 4; }
.band.lower { stroke: #ff0a30; }
.band.inner { stroke: #2effff; stroke-width: 2; }
.band.slow { stroke: #808080; stroke-width: 2; }
.y { fill: url(#y); stroke: #c4c42a; }
.r { fill: url(#r); stroke: #c40812; }
.c { fill: url(#c); stroke: #1fb8c4; }
.b { fill: url(#b); stroke: #0818c4; }
.y, .r, .c, .b { stroke-width: 2; }
.tag { fill: url(#tag); stroke: #7f97a3; stroke-width: 2; }
.tag.gold { fill: url(#gold); }
.tag.mint { fill: url(#mint); stroke: #8ce08c; }
.panel .note text { font-size: 38px; font-weight: bold; white-space: pre; }

.indicator { position: relative; }
.indicator-head {
  position: absolute;
  top: 0;
  left: 9px;
  height: 32px;
  display: flex;
  align-items: center;
  gap: 5px;
  padding: 0 5px 4px 6px;
  border: solid #6f8a94;
  border-width: 0 2px 2px 0;
  background: linear-gradient(#c4e0ec, #9dbccb);
}

/* Bottom toolbar */
.toolbar {
  height: 62px;
  display: flex;
  align-items: center;
  margin: 0 7px;
  padding: 4px 9px 0 10px;
  border-top: 2px solid #6f8a94;
  box-shadow: inset 0 2px #d5f0fa;
  background: linear-gradient(#aecedb, #90abb6);
  gap: 12px;
}
.list { margin-left: 6px; }
.book { margin-left: 14px; }
.scroller { flex: 1; display: flex; margin-left: 2px; height: 32px; background: #98b3c0; border: solid #73909c; border-width: 2px 0; }
.step, .thumb {
  margin: -2px 0;
  height: 32px;
  border: 2px solid #73909c;
  border-radius: 6px;
  background: linear-gradient(#b4d4e2, #98b4c1);
}
.step { width: 32px; padding: 0; display: flex; align-items: center; justify-content: center; }
.track { flex: 1; display: flex; justify-content: flex-end; }
.thumb { width: 184px; display: flex; flex-direction: column; align-items: center; justify-content: center; gap: 3px; }
.thumb i { width: 13px; height: 2px; background: #64808c; }
.zooms { display: flex; align-items: center; gap: 14px; }

/* Desktop and dock */
.desktop {
  flex: 1;
  display: flex;
  margin-top: 7px;
  padding: 0 82px;
  background:
    radial-gradient(ellipse 40px 46px at 40px 68px, #33241e, #1c1411 80%, transparent),
    radial-gradient(ellipse 44px 40px at 16px 116px, #3a2a24, #1a1210 80%, transparent),
    radial-gradient(ellipse 30px 50px at calc(100% - 60px) 80px, #3c4d60, transparent),
    radial-gradient(ellipse 24px 40px at calc(100% - 14px) 40px, #303c4c, transparent),
    linear-gradient(90deg, #0d0a09 50%, #141822 50%);
  box-shadow: 0 -8px #5088e0;
}
.dock {
  flex: 1;
  display: flex;
  align-items: flex-start;
  padding: 0 7px;
  border-radius: 10px 10px 0 0;
  background: linear-gradient(90deg, #5a5558, #665a5a 22%, #5c5455 32%, #6a5c5e 46%, #5f6474 51%, #6b7389 57%, #686a78 61%, #7b89a3 68%, #716f7e 73%, #ef7f55 77%, #f08055 83%, #b5776c 88%, #776f7c 94%, #7480a0);
}
.dock .plain { flex: 102 1 0; }
.dock svg { width: 100%; }
.divider { flex: 49 1 0; height: 94px; margin: 16px 0 0; border: 0; background: linear-gradient(#b04c28, #b04c28) center / 2px 100% no-repeat; }
.dot { fill: #000; }
.petals rect { mix-blend-mode: multiply; }
.letter { font: bold 40px Roboto, sans-serif; fill: #fff; text-anchor: middle; }
.letter.small { font-size: 36px; }
.month { font: 16px Inter, sans-serif; fill: #fff; text-anchor: middle; }
.date { font: 38px Inter, sans-serif; fill: #222; text-anchor: middle; }
.pen { font: italic 11px "Open Sans", sans-serif; fill: #333; }
.redpen { fill: #d22; }
.brand { font: bold 9px "Liberation Sans", sans-serif; }
.panel + .brand { display: none; }
```
FILE: chart.js
```js
const NS = 'http://www.w3.org/2000/svg';
const first = 504, step = 22.846;
const xAt = i => Math.round(first + i * step);

function add(parent, tag, attrs, text) {
  const el = document.createElementNS(NS, tag);
  for (const k in attrs) el.setAttribute(k, attrs[k]);
  if (text !== undefined) el.textContent = text;
  parent.appendChild(el);
  return el;
}
const $ = id => document.getElementById(id);

// Bollinger and Keltner bands: one value per bar, beginning at bar `from`
function band(cls, from, ys, lead = [], tail = []) {
  const pts = [...lead, ...ys.map((y, k) => [xAt(from + k), y]), ...tail];
  add($('bands'), 'polyline', { class: 'band ' + cls, points: pts.map(p => p.join()).join(' ') });
}
band('slow', 0, [], [[481, 265], [526, 255], [550, 247], [578, 238]]);
band('inner', 4, [245,254,257,264,272,284,296,308,316,332,346,352,356,362,366,374,390,406,426,445,469,480,492,502,508,514,522,530,540,536,538,548,557,569,576,580,579,582,580,578,570,570,570,574,576,572,568,570,576,590,607,621,640,646,654,664,676,681,683,692,701,706,710,706,708,713,718,715,711,706,696,681,658,647,642], [[572, 239]]);
band('inner', -1, [346,355,366,378,378,384,382,386,396,414,427,440,452,470,482,496,503,511,523,534,548,564,590,614,640,660,680,694,704,707,713,721,732,734,740,738,740,747,751,754,752,756,750,748,745,738,733,733,731,728,722,726,724,730,740,756,776,789,805,814,831,841,848,852,856,863,870,876,880,882,888,882,880,876,866,856,845,834,823,813]);
band('outer', 4, [261, 259], [[579, 238]], [[653, 238]]);
band('outer', 18, [243,257,272,280,296,318,341,375,394,408,412,421,429,439,442,440,444,480,497,513,538,534,534,538,538,544,546,546,548,548,546,540,538,536,523,510,506,495,485,494,510,534,543,546,550,562,581,596,606,606,616,642,635,625,616,612,605,606,578,570,565], [[898, 238]]);
band('outer lower', -1, [457,452,428,392,386,373,376,400,435,486,526,552,572,610,636,642,642,650,660,664,674,694,731,756,786,804,800,802,806,810,816,824,834,836,836,834,818,814,810,796,798,800,790,790,774,757,757,758,757,756,755,759,762,788,830,871,919,958,966,970,976,984,988,995,996,992,990,988,988,982,968,970,975,972,962,946,916,900,895,887]);

// Bars: colour, wick top, body top, body bottom, wick bottom
const bars = `
y 315 326 362 365|y 281 300 322 349|y 289 296 300 342|y 293 296 312 342|y 293 312 316 334|y 289 308 348 368|y 315 352 362 373
r 357 368 436 440|r 419 440 482 496|r 469 486 574 605|r 533 544 584 615|r 521 531 534 592|r 521 525 528 565|r 445 538 610 616
r 583 596 606 616|y 501 524 600 615|y 420 420 518 560|y 414 414 522 525|r 405 524 534 549|y 465 486 530 565|r 482 482 584 589
r 575 588 656 663|r 625 652 766 766|r 739 746 764 823|r 673 744 780 793|r 753 766 776 807|y 639 660 772 780|y 623 648 664 704
y 581 640 674 674|y 621 640 670 713|y 631 644 674 720|y 659 670 712 727|y 685 716 729 763|y 660 660 732 747|y 567 586 654 704
y 515 554 582 589|y 535 550 598 607|c 587 602 670 670|c 631 634 674 693|c 587 598 632 649|c 541 560 592 599|b 562 562 684 693
b 677 680 710 727|b 691 706 750 772|b 647 660 746 753|b 601 624 658 679|b 601 618 654 675|b 613 648 674 681|b 639 660 670 693
c 617 628 658 661|c 575 592 632 635|r 588 588 736 736|r 699 738 742 753|r 746 746 810 829|r 803 808 882 889|r 843 886 916 929
r 875 918 958 961|r 927 952 960 973|y 797 810 954 969|y 771 794 818 845|y 763 790 866 887|y 803 844 862 893|y 777 790 840 875
y 751 794 836 845|y 801 810 830 861|y 751 758 804 819|y 732 762 804 811|y 711 731 810 810|y 633 660 726 747|c 647 658 678 691
c 647 674 712 723|c 669 686 716 721|c 639 678 684 704|c 665 680 716 733|b 685 720 738 738|c 657 678 746 746|c 637 666 684 737
c 515 524 676 704|b 534 534 660 693|b 659 666 670 670`.trim().split(/[|\n]/);
bars.forEach((bar, k) => {
  const [cls, hi, top, bottom, lo] = bar.split(' ');
  const x = xAt(k - 1);
  add($('candles'), 'path', { class: cls, d: `M${x} ${hi}V${lo}` });
  add($('candles'), 'rect', { class: cls, x: x - 8, y: top, width: 16, height: bottom - top });
});

// Value axes
function axis(group, marks, dy) {
  for (const [y, label] of marks) {
    add(group, 'path', { class: 'tick', d: `M2782 ${y}h8` });
    if (label) add(group, 'text', { x: 2793, y: y + dy }, label);
  }
}
function tag(group, y, width, label, colour, kind = '', height = 28) {
  add(group, 'rect', { class: 'tag ' + kind, x: 2791, y, width, height });
  add(group, 'text', { x: 2793, y: y + 21, fill: colour }, label);
}
function mark(group, y, colour, thick = 2) {
  add(group, 'path', { d: `M2782 ${y}h8`, stroke: colour, 'stroke-width': thick });
}
const price = $('price-axis');
const prices = [];
for (let p = 7280, k = 0; p >= 7205; p -= 5, k++) {
  prices.push([Math.round(256 + k * 65.4), p === 7250 ? '' : p.toLocaleString('en-GB')]);
}
axis(price, prices, 7);
mark(price, 565, '#ff0a14'); mark(price, 642, '#2effff'); mark(price, 670, '#000');
mark(price, 813, '#2effff'); mark(price, 887, '#ff0a30');
tag(price, 551, 78, '7,256.4', '#ff0a14');
tag(price, 629, 78, '7,250.5', '#2effff');
tag(price, 657, 78, '7,248.3', '#000', 'gold');
tag(price, 685, 56, '222T', '#000', 'mint');
tag(price, 799, 78, '7,237.5', '#2effff');
tag(price, 873, 78, '7,231.8', '#ff0a30');

const squeeze = $('squeeze-axis');
axis(squeeze, [[1296, '15'], [1336, '10'], [1376, '5'], [1456, '-5'], [1496, '-10'], [1536, '-15']], 6);
mark(squeeze, 1324, '#0a20ff'); mark(squeeze, 1416, '#0a20ff', 3); mark(squeeze, 1420, '#ff0a14');
tag(squeeze, 1310, 72, '11.386', '#0a20ff');
tag(squeeze, 1388, 18, '0', '#0a20ff');
tag(squeeze, 1402, 18, '0', '#0a20ff');
tag(squeeze, 1418, 80, '-0.5000', '#ff0a14');

// Time axis
const times = [[46,'16:05'],[344,'18:16'],[618,'20:02'],[778,'27'],[847,'06:26'],[915,'08:02'],[1166,'10:07'],[1280,'12:12'],[1464,'14:00'],[1830,'16:02'],[2058,'18:01'],[2172,'20:08'],[2286,'28'],[2446,'02:19'],[2584,'04:19'],[2720,'06:19']];
for (const [x, label] of times) {
  add($('time-axis'), 'path', { class: 'tick', d: `M${x} 1568v7` });
  add($('time-axis'), 'text', { class: label.length < 3 ? 'middle bold' : 'middle', x, y: 1598 }, label);
}
```
